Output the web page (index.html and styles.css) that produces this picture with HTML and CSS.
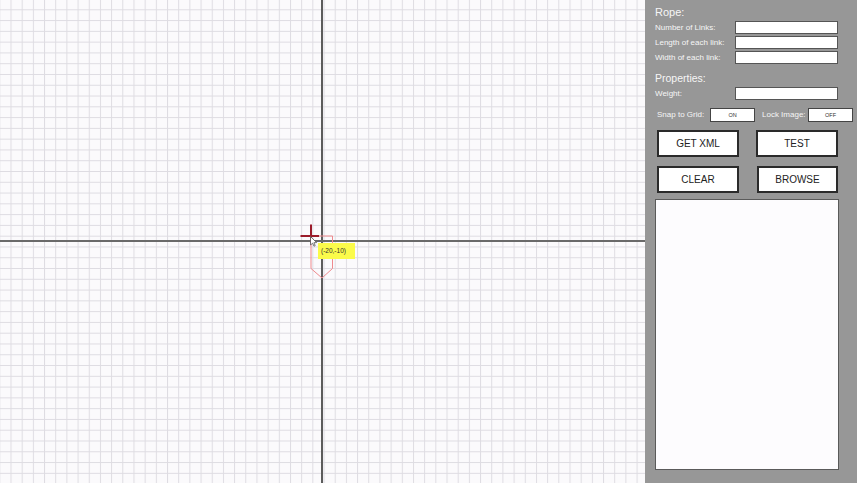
FILE: index.html
```html
<!DOCTYPE html>
<html>
<head>
<meta charset="utf-8">
<link rel="stylesheet" href="styles.css">
</head>
<body>
<div class="app">
  <div class="canvas">
    <svg class="grid" width="645" height="483" viewBox="0 0 645 483">
      <defs>
        <pattern id="cells" x="10.5" y="9.3" width="11.18" height="10.78" patternUnits="userSpaceOnUse">
          <line x1="0.5" y1="0" x2="0.5" y2="10.78" stroke="#dedce2" stroke-width="1"/>
          <line x1="0" y1="0.5" x2="11.18" y2="0.5" stroke="#dedce2" stroke-width="1"/>
        </pattern>
      </defs>
      <rect width="645" height="483" fill="#fbfafc"/>
      <rect width="645" height="483" fill="url(#cells)"/>
    </svg>
    <div class="axis axis-v"></div>
    <div class="axis axis-h"></div>
    <svg class="marker" width="60" height="60" viewBox="0 0 60 60">
      <polygon points="11,12 32.5,12 32.5,44.5 22,54 11,44.5" fill="none" stroke="#ee8a8e" stroke-width="1"/>
      <line x1="0.5" y1="12" x2="19" y2="12" stroke="#9b1b2a" stroke-width="2"/>
      <line x1="11" y1="0.5" x2="11" y2="19" stroke="#9b1b2a" stroke-width="2"/>
      <path d="M10.5 12.5 L10.5 21 L12.6 19.2 L14 22.2 L15.2 21.6 L13.9 18.7 L16.6 18.6 Z" fill="#ffffff" stroke="#555" stroke-width="0.8" stroke-linejoin="round"/>
    </svg>
    <div class="tip">(-20,-10)</div>
  </div>
  <div class="panel">
    <div class="heading">Rope:</div>
    <div class="fields">
      <span class="label">Number of Links:</span><span class="box"></span>
      <span class="label">Length of each link:</span><span class="box"></span>
      <span class="label">Width of each link:</span><span class="box"></span>
    </div>
    <div class="heading heading2">Properties:</div>
    <div class="fields weight">
      <span class="label">Weight:</span><span class="box"></span>
    </div>
    <div class="toggles">
      <span class="label snap-label">Snap to Grid:</span><span class="toggle">ON</span>
      <span class="label lock-label">Lock Image:</span><span class="toggle">OFF</span>
    </div>
    <div class="buttons">
      <div class="btn">GET XML</div>
      <div class="btn">TEST</div>
      <div class="btn">CLEAR</div>
      <div class="btn btn-shift">BROWSE</div>
    </div>
    <div class="list"></div>
  </div>
</div>
</body>
</html>
```
FILE: styles.css
```css
html, body {
  margin: 0;
  padding: 0;
  width: 857px;
  height: 483px;
  overflow: hidden;
  font-family: "Liberation Sans", Arial, sans-serif;
}

.app {
  display: flex;
  width: 857px;
  height: 483px;
}

.canvas {
  position: relative;
  width: 645px;
  height: 483px;
  flex: none;
  background: #fbfafc;
  overflow: hidden;
}

.grid {
  position: absolute;
  left: 0;
  top: 0;
  display: block;
}

.axis {
  position: absolute;
  background: #5c5c5c;
}
.axis-v {
  left: 321px;
  top: 0;
  width: 2px;
  height: 483px;
}
.axis-h {
  left: 0;
  top: 240px;
  width: 645px;
  height: 1.5px;
  background: #6a6a6a;
}

.marker {
  position: absolute;
  left: 300px;
  top: 224px;
}

.tip {
  position: absolute;
  left: 318px;
  top: 243px;
  width: 37px;
  height: 16px;
  box-sizing: border-box;
  padding-left: 3px;
  background: #fbfb4a;
  color: #333;
  font-size: 6.5px;
  line-height: 15px;
}

.panel {
  flex: none;
  width: 212px;
  height: 483px;
  box-sizing: border-box;
  background: #979797;
  padding: 6px 0 0 10px;
  color: #f6f6f6;
}

.heading {
  font-size: 11px;
  line-height: 13px;
  height: 13px;
}
.heading2 {
  margin-top: 8px;
  font-size: 10.5px;
}

.fields {
  margin-top: 2px;
  display: grid;
  grid-template-columns: 80px 103px;
  grid-auto-rows: 13px;
  row-gap: 2px;
}
.weight {
  margin-top: 2px;
}

.label {
  font-size: 8px;
  line-height: 13px;
  white-space: nowrap;
}

.box {
  display: block;
  background: #ffffff;
  border: 1px solid #555;
  box-sizing: border-box;
}

.toggles {
  margin-top: 7px;
  display: flex;
  align-items: center;
  height: 15px;
  padding-left: 2px;
}
.snap-label { width: 53px; }
.lock-label { width: 46px; margin-left: 7px; }

.toggle {
  width: 45px;
  height: 14px;
  box-sizing: border-box;
  background: #fff;
  border: 1px solid #444;
  color: #333;
  font-size: 5.5px;
  line-height: 12px;
  text-align: center;
}

.buttons {
  margin-top: 8px;
  margin-left: 2px;
  display: grid;
  grid-template-columns: 82px 82px;
  grid-auto-rows: 27px;
  column-gap: 17px;
  row-gap: 9px;
}

.btn {
  background: #fff;
  border: 2px solid #2a2a2a;
  box-sizing: border-box;
  color: #222;
  font-size: 10px;
  line-height: 23px;
  text-align: center;
}
.btn-shift {
  margin-left: 1px;
}

.list {
  margin-top: 6px;
  width: 184px;
  height: 271px;
  box-sizing: border-box;
  background: #fdfcfe;
  border: 1px solid #5a5a5a;
}
```
